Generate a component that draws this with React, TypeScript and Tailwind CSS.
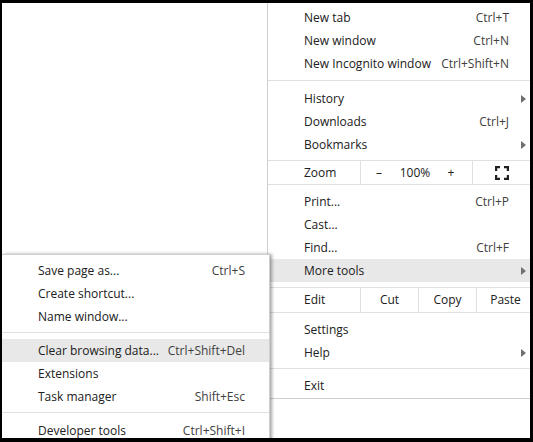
const font = { fontFamily: '"Segoe UI", "Open Sans", "Noto Sans", sans-serif' };

function Arrow() {
  return (
    <svg width="5" height="8" viewBox="0 0 5 8" className="shrink-0">
      <path d="M0 0 L5 4 L0 8 Z" fill="#6f6f6f" />
    </svg>
  );
}

function FullscreenIcon() {
  return (
    <svg width="14" height="14" viewBox="0 0 14 14">
      <path
        d="M1 5 V1 H5 M9 1 H13 V5 M13 9 V13 H9 M5 13 H1 V9"
        fill="none"
        stroke="#202020"
        strokeWidth="2.4"
      />
    </svg>
  );
}

type Item = { label: string; shortcut?: string; arrow?: boolean; active?: boolean };

function Row({ label, shortcut, arrow, active }: Item) {
  return (
    <div
      className={`flex items-center h-[23px] pl-[36px] pr-[9px] text-[12px] ${active ? "bg-[#e8e8e8]" : ""}`}
    >
      <span className="flex-1 text-[#202020]">{label}</span>
      {shortcut && <span className="text-[#404040] mr-[19px]">{shortcut}</span>}
      {arrow && <span className="ml-auto mr-[2px]"><Arrow /></span>}
    </div>
  );
}

function Sep() {
  return <div className="mt-[5px] mb-[6px] h-px bg-[#e0e0e0]" />;
}

export default function App() {
  return (
    <div className="w-[533px] h-[442px] bg-black p-[3px] pl-[2px] pr-[3px] pb-[4px]" style={font}>
      <div className="relative w-full h-full bg-white overflow-hidden">
        {/* Main menu */}
        <div className="absolute left-[265px] top-0 w-[270px] bg-white border-l border-b border-[#cfcfcf] pt-[3px] pb-[1px]">
          <Row label="New tab" shortcut="Ctrl+T" />
          <Row label="New window" shortcut="Ctrl+N" />
          <Row label="New Incognito window" shortcut="Ctrl+Shift+N" />
          <Sep />
          <Row label="History" arrow />
          <Row label="Downloads" shortcut="Ctrl+J" />
          <Row label="Bookmarks" arrow />
          <div className="mt-[4px] flex items-center h-[25px] border-y border-[#e0e0e0] text-[12px] text-[#202020]">
            <span className="w-[92px] pl-[36px]">Zoom</span>
            <div className="flex items-center h-full w-[113px] border-l border-r border-[#e0e0e0]">
              <span className="w-[36px] text-center">–</span>
              <span className="w-[36px] text-center">100%</span>
              <span className="w-[36px] text-center">+</span>
            </div>
            <div className="flex items-center justify-center w-[58px] h-full">
              <FullscreenIcon />
            </div>
          </div>
          <div className="h-[5px]" />
          <Row label="Print..." shortcut="Ctrl+P" />
          <Row label="Cast..." />
          <Row label="Find..." shortcut="Ctrl+F" />
          <Row label="More tools" arrow active />
          <div className="mt-[5px] flex items-center h-[26px] border-y border-[#e0e0e0] text-[12px] text-[#202020]">
            <span className="w-[92px] pl-[36px]">Edit</span>
            <span className="w-[58px] h-full flex items-center justify-center border-l border-[#e0e0e0]">Cut</span>
            <span className="w-[58px] h-full flex items-center justify-center border-l border-[#e0e0e0]">Copy</span>
            <span className="w-[58px] h-full flex items-center justify-center border-l border-[#e0e0e0]">Paste</span>
          </div>
          <div className="h-[5px]" />
          <Row label="Settings" />
          <Row label="Help" arrow />
          <div className="mt-[4px] mb-[5px] h-px bg-[#e0e0e0]" />
          <Row label="Exit" />
        </div>

        {/* More tools submenu */}
        <div className="absolute left-0 top-[251px] w-[268px] h-[200px] bg-white border-t border-r border-[#cfcfcf] pt-[4px] shadow-[2px_0_3px_rgba(0,0,0,0.35)]">
          <div className="flex items-center h-[23px] pl-[36px] pr-[24px] text-[12px]">
            <span className="flex-1 text-[#202020]">Save page as...</span>
            <span className="text-[#404040]">Ctrl+S</span>
          </div>
          <div className="flex items-center h-[23px] pl-[36px] text-[12px] text-[#202020]">Create shortcut...</div>
          <div className="flex items-center h-[23px] pl-[36px] text-[12px] text-[#202020]">Name window...</div>
          <div className="mt-[4px] mb-[6px] h-px bg-[#e0e0e0]" />
          <div className="flex items-center h-[23px] pl-[36px] pr-[24px] text-[12px] bg-[#e8e8e8]">
            <span className="flex-1 text-[#202020]">Clear browsing data...</span>
            <span className="text-[#404040]">Ctrl+Shift+Del</span>
          </div>
          <div className="flex items-center h-[23px] pl-[36px] text-[12px] text-[#202020]">Extensions</div>
          <div className="flex items-center h-[23px] pl-[36px] pr-[24px] text-[12px]">
            <span className="flex-1 text-[#202020]">Task manager</span>
            <span className="text-[#404040]">Shift+Esc</span>
          </div>
          <div className="mt-[4px] mb-[6px] h-px bg-[#e0e0e0]" />
          <div className="flex items-center h-[23px] pl-[36px] pr-[24px] text-[12px]">
            <span className="flex-1 text-[#202020]">Developer tools</span>
            <span className="text-[#404040]">Ctrl+Shift+I</span>
          </div>
        </div>
      </div>
    </div>
  );
}
